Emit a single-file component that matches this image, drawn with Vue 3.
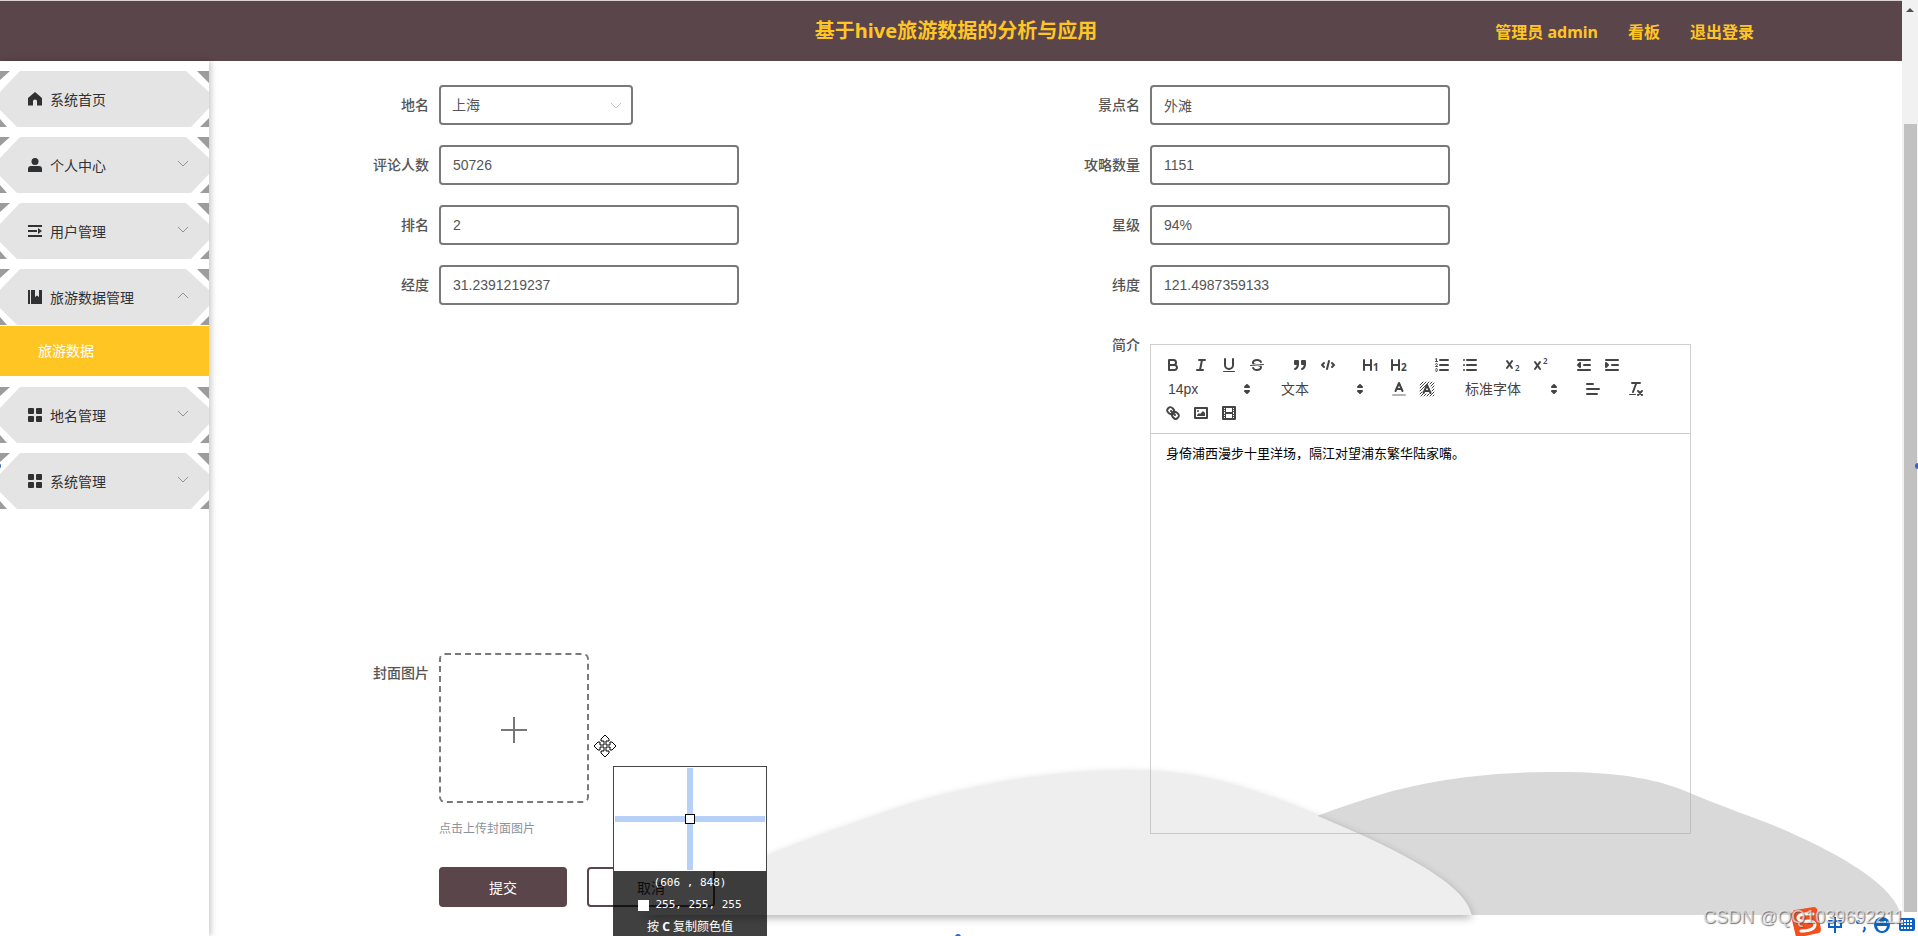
<script setup>
import { ref } from 'vue'

const menu = [
  { label: '系统首页', icon: 'home' },
  { label: '个人中心', icon: 'user', arrow: 'down' },
  { label: '用户管理', icon: 'list', arrow: 'down' },
  { label: '旅游数据管理', icon: 'book', arrow: 'up', children: ['旅游数据'] },
  { label: '地名管理', icon: 'grid', arrow: 'down' },
  { label: '系统管理', icon: 'grid', arrow: 'down' },
]

const place = ref('上海')
const fields = ref([
  { id: 'spot', label: '景点名', value: '外滩' },
  { id: 'comments', label: '评论人数', value: '50726' },
  { id: 'guides', label: '攻略数量', value: '1151' },
  { id: 'rank', label: '排名', value: '2' },
  { id: 'star', label: '星级', value: '94%' },
  { id: 'lng', label: '经度', value: '31.2391219237' },
  { id: 'lat', label: '纬度', value: '121.4987359133' },
])
const intro = ref('身倚浦西漫步十里洋场，隔江对望浦东繁华陆家嘴。')

const icons = {
  bold: '<path class="s" d="M5,4H9.5A2.5,2.5,0,0,1,12,6.5v0A2.5,2.5,0,0,1,9.5,9H5V4Z"/><path class="s" d="M5,9h5.5A2.5,2.5,0,0,1,13,11.5v0A2.5,2.5,0,0,1,10.5,14H5V9Z"/>',
  italic: '<path class="s" d="M7 4H13M5 14H11M8 14L10 4"/>',
  underline: '<path class="s" d="M5,3V9a4,4,0,0,0,4,4H9a4,4,0,0,0,4-4V3"/><rect class="f" height="1" rx="0.5" width="12" x="3" y="15"/>',
  strike: '<path class="s t" d="M15.5 8.5L2.5 9.5"/><path class="f" d="M9.007,8C6.542,7.791,6,7.519,6,6.5,6,5.792,7.283,5,9,5c1.571,0,2.765.679,2.969,1.309a1,1,0,0,0,1.9-.617C13.356,4.106,11.354,3,9,3,6.2,3,4,4.538,4,6.5a3.2,3.2,0,0,0,.5,1.843Z"/><path class="f" d="M8.984,10C11.457,10.208,12,10.479,12,11.5c0,0.708-1.283,1.5-3,1.5-1.571,0-2.765-.679-2.969-1.309a1,1,0,1,0-1.9.617C4.644,13.894,6.646,15,9,15c2.8,0,5-1.538,5-3.5a3.2,3.2,0,0,0-.5-1.843Z"/>',
  quote: '<rect class="f s" height="3" width="3" x="4" y="5"/><rect class="f s" height="3" width="3" x="11" y="5"/><path class="f s" d="M7,8c0,4.031-3,5-3,5"/><path class="f s" d="M14,8c0,4.031-3,5-3,5"/>',
  code: '<path class="s" d="M5 7L3 9L5 11M13 7L15 9L13 11M10 5L8 13"/>',
  h1: '<path class="s" d="M2 4V14M9 4V14M2 9H9"/><text x="11" y="15" class="d">1</text>',
  h2: '<path class="s" d="M2 4V14M9 4V14M2 9H9"/><text x="11" y="15" class="d">2</text>',
  ordered: '<path class="s" d="M7 4H15M7 9H15M7 14H15"/><path class="s t" d="M2.5 5.5H4.5M3.5 5.5V2.5L2.5 3"/><path class="s t" d="M4.5,10.5h-2c0-.234,1.85-1.076,1.85-2.234A0.959,0.959,0,0,0,2.5,8.156"/><path class="s t" d="M2.5,14.846a0.959,0.959,0,0,0,1.85-.109A0.7,0.7,0,0,0,3.75,14a0.688,0.688,0,0,0,.6-0.736,0.959,0.959,0,0,0-1.85-.109"/>',
  bullet: '<path class="s" d="M6 4H15M6 9H15M6 14H15M3 4H3M3 9H3M3 14H3"/>',
  sub: '<path class="s" d="M3 5L8 12M8 5L3 12"/><text x="11" y="15" class="d n">2</text>',
  sup: '<path class="s" d="M3 6L8 13M8 6L3 13"/><text x="11" y="8" class="d n">2</text>',
  outdent: '<path class="s" d="M3 14H15M3 4H15M9 9H15"/><path class="f s" d="M5 7V11L3 9Z"/>',
  indent: '<path class="s" d="M3 14H15M3 4H15M9 9H15"/><path class="f s" d="M3 7V11L5 9Z"/>',
  color: '<path class="s" opacity=".4" d="M3 15H15"/><path class="s" d="M5.5 11L9 3L12.5 11M11.63 9H6.38"/>',
  background: '<path class="s t" d="M2 5L5 2M2 8L8 2M2 11L11 2M2 14L4 12M12 4L14 2M3 16L5 14M13 6L16 3M6 16L8 14M14 8L16 6M9 16L11 14M14 11L16 9M12 16L16 12M15 16L16 15"/><path class="s" d="M5.5 13L9 5L12.5 13M11.63 11H6.38"/>',
  align: '<path class="s" d="M3 9H15M3 14H13M3 4H9"/>',
  clean: '<path class="s" d="M5 3H13M6 12L9.35 3M11 11L15 15M15 11L11 15"/><rect class="f" height="1" rx="0.5" width="7" x="2" y="14"/>',
  link: '<path class="s" d="M7 7L11 11"/><path class="s" d="M8.9,4.577a3.476,3.476,0,0,1,.36,4.679A3.476,3.476,0,0,1,4.577,8.9C3.185,7.5,2.035,6.4,4.217,4.217S7.5,3.185,8.9,4.577Z"/><path class="s" d="M13.423,9.1a3.476,3.476,0,0,0-4.679-.36,3.476,3.476,0,0,0,.36,4.679c1.392,1.392,2.5,2.542,4.679.36S14.815,10.5,13.423,9.1Z"/>',
  image: '<rect class="s" height="10" width="12" x="3" y="4"/><circle class="f" cx="6" cy="7" r="1"/><path class="f" d="M5 12V11L7 9L8 10L11 7L13 9V12Z"/>',
  video: '<rect class="s" height="12" width="12" x="3" y="3"/><path class="f" d="M5 3h1v12H5zM12 3h1v12h-1zM5 8h8v2H5zM3 5h3v1H3zM3 7h3v1H3zM3 10h3v1H3zM3 12h3v1H3zM12 5h3v1h-3zM12 7h3v1h-3zM12 10h3v1h-3zM12 12h3v1h-3z"/>',
}

const toolbar = [
  { buttons: ['bold', 'italic', 'underline', 'strike'] },
  { buttons: ['quote', 'code'] },
  { buttons: ['h1', 'h2'] },
  { buttons: ['ordered', 'bullet'] },
  { buttons: ['sub', 'sup'] },
  { buttons: ['outdent', 'indent'] },
  { select: '14px', title: '字号' },
  { select: '文本', title: '标题' },
  { buttons: ['color', 'background'] },
  { select: '标准字体', title: '字体', wide: true },
  { buttons: ['align'] },
  { buttons: ['clean'] },
  { buttons: ['link', 'image', 'video'] },
]
</script>

<template>
  <div class="page">
    <div class="view">
      <header class="top">
        <h1 class="title">基于hive旅游数据的分析与应用</h1>
        <nav class="links">
          <a href="#">管理员 admin</a>
          <a href="#">看板</a>
          <a href="#">退出登录</a>
        </nav>
      </header>

      <div class="body">
        <aside class="side">
          <ul class="menu">
            <li v-for="item in menu" :key="item.label">
              <button type="button" class="entry">
                <svg class="plate" viewBox="0 0 209 56" preserveAspectRatio="none" aria-hidden="true">
                  <path fill="#e4e4e4" d="M20 0H186L209 21V37L191 56H17L0 39V21Z" />
                  <path fill="#9c9c9c" d="M0 0H10L0 9ZM0 48L7 56H0ZM197 0H209V12ZM209 47V56H200Z" />
                </svg>
                <svg class="glyph" viewBox="0 0 14 14" aria-hidden="true">
                  <path v-if="item.icon === 'home'" d="M7 0L14 6V13.500H9V9Q9 7.500 7 7.500T5 9V13.500H0V6Z" />
                  <g v-else-if="item.icon === 'user'">
                    <circle cx="7" cy="3.500" r="3.500" /><path d="M0 14V11Q0 8 3 8H11Q14 8 14 11V14Z" />
                  </g>
                  <path v-else-if="item.icon === 'list'" d="M0 1H14V3H0ZM0 6H9V8H0ZM10 4L14 7L10 10ZM0 11H14V13H0Z" />
                  <path v-else-if="item.icon === 'book'" d="M0 0H2V14H0ZM3 0H7V7L9 5.500L11 7V0H14V14H3Z" />
                  <g v-else>
                    <rect width="6" height="6" rx="1" /><rect x="8" width="6" height="6" rx="1" />
                    <rect y="8" width="6" height="6" rx="1" /><rect x="8" y="8" width="6" height="6" rx="1" />
                  </g>
                </svg>
                <span class="name">{{ item.label }}</span>
                <svg v-if="item.arrow" class="arrow" viewBox="0 0 12 12" aria-hidden="true">
                  <path :d="item.arrow === 'up' ? 'M1 7L6 2L11 7' : 'M1 2L6 7L11 2'" />
                </svg>
              </button>
              <a v-for="child in item.children" :key="child" href="#" class="child">{{ child }}</a>
            </li>
          </ul>
        </aside>

        <main class="main">
          <svg class="hills" viewBox="632 765 1270 150" preserveAspectRatio="none" aria-hidden="true">
            <path fill="#d9d9d9" d="M1260 840C1285 828 1320 814 1360 801C1430 777 1500 772 1556 772C1625 772 1660 780 1690 793C1735 812 1770 822 1800 837C1850 860 1895 888 1901 915H1260Z" />
            <path class="front" d="M640 915C665 899 720 876 766 857C810 839 850 825 903 807C970 786 1050 771 1128 771C1200 771 1250 788 1318 816C1370 838 1465 878 1472 915Z" />
          </svg>

          <form class="form" @submit.prevent>
            <div class="item">
              <label for="place">地名</label>
              <span class="pick">
                <select id="place" v-model="place"><option>上海</option></select>
                <svg viewBox="0 0 12 12" aria-hidden="true"><path d="M1 3L6 8L11 3" /></svg>
              </span>
            </div>
            <div v-for="f in fields" :key="f.id" class="item">
              <label :for="f.id">{{ f.label }}</label>
              <input :id="f.id" v-model="f.value" type="text">
            </div>

            <div class="item intro">
              <label for="intro">简介</label>
              <div class="editor">
                <div class="tools">
                  <span v-for="(g, i) in toolbar" :key="i" class="group">
                    <span v-if="g.select" class="format" :class="{ wide: g.wide }">
                      <select :aria-label="g.title"><option>{{ g.select }}</option></select>
                      <svg viewBox="0 0 18 18" aria-hidden="true"><path d="M7 11L9 13L11 11ZM7 7L9 5L11 7Z" /></svg>
                    </span>
                    <button v-for="b in g.buttons" :key="b" type="button" :aria-label="b">
                      <svg viewBox="0 0 18 18" aria-hidden="true" v-html="icons[b]"></svg>
                    </button>
                  </span>
                </div>
                <textarea id="intro" v-model="intro" spellcheck="false"></textarea>
              </div>
            </div>

            <div class="item cover">
              <label for="cover">封面图片</label>
              <div>
                <button id="cover" type="button" class="upload" aria-label="上传">
                  <svg viewBox="0 0 26 26" aria-hidden="true"><path d="M13 0V26M0 13H26" /></svg>
                </button>
                <p class="tip">点击上传封面图片</p>
              </div>
            </div>

            <div class="actions">
              <button type="submit" class="submit">提交</button>
              <button type="button" class="cancel">取消</button>
            </div>
          </form>
        </main>
      </div>
    </div>

    <div class="scroll" aria-hidden="true">
      <svg viewBox="0 0 8 4"><path d="M0 4L4 0L8 4Z" /></svg>
      <div class="thumb"></div>
    </div>

    <svg class="mover" viewBox="0 0 24 24" aria-hidden="true">
      <path d="M12 1L16 5V7H13V11H17V8H19L23 12L19 16H17V13H13V17H16V19L12 23L8 19V17H11V13H7V16H5L1 12L5 8H7V11H11V7H8V5Z" />
    </svg>

    <div class="probe">
      <div class="lens"><i class="across"></i><i class="down"></i><i class="dot"></i></div>
      <div class="info">
        <div class="mono">(606 , 848)</div>
        <div class="mono"><i class="swatch"></i>255, 255, 255</div>
        <div>按 <b>C</b> 复制颜色值</div>
      </div>
    </div>

    <i class="knob left"></i>
    <i class="knob right"></i>
    <i class="knob bottom"></i>

    <svg class="ime" viewBox="0 0 128 30" aria-hidden="true">
      <path fill="#f4501e" d="M3 5Q3 3 5 3L24 0Q26 0 27 2L31 22Q31 25 29 26L10 30H6L1 9Q0 6 3 5Z" />
      <path fill="none" stroke="#fff" stroke-width="3" stroke-linecap="round" d="M23 7Q8 6 8 11Q9 15 18 14Q25 14 25 18Q24 24 11 24" />
      <g fill="none" stroke="#0b62c4" stroke-width="2">
        <path d="M39 14H51V20H39ZM45 10V26" />
        <path d="M74 20Q76 22 73 25" />
        <circle cx="68" cy="15" r="1" />
      </g>
      <circle cx="92" cy="18" r="8" fill="#0b62c4" />
      <path fill="#fff" d="M87 19H97Q96 24 92 24T87 19ZM88 14h2v2h-2zM94 14h2v2h-2z" />
      <rect x="109" y="11" width="16" height="13" rx="2" fill="#0b62c4" />
      <path stroke="#fff" stroke-width="2" stroke-dasharray="2 1" d="M111 14H123M111 17H123M111 21H123" />
    </svg>
    <span class="mark">CSDN @QQ1039692211</span>
  </div>
</template>

<style>
body {
  margin: 0;
  background: #fff;
}
</style>

<style scoped>
.page {
  --sans: "Noto Sans", "Noto Sans CJK SC", sans-serif;
  position: relative;
  display: flex;
  min-height: 100vh;
  overflow: hidden;
  font-family: var(--sans);
  font-size: 14px;
  color: #333;
}
.page *,
.page *::before {
  box-sizing: border-box;
}
button,
select,
input,
textarea {
  font: inherit;
  color: inherit;
  margin: 0;
}
button {
  cursor: pointer;
}
.view {
  flex: 1;
  display: flex;
  flex-direction: column;
  min-width: 0;
}
.top {
  display: grid;
  grid-template-columns: 1fr auto 1fr;
  align-items: center;
  height: 61px;
  padding: 0 148px 0 158px;
  background: #5a454b;
  border-top: 1px solid #ddd3d6;
  color: #ffc623;
}
.title {
  grid-column: 2;
  margin: 0;
  font-size: 20px;
  line-height: 30px;
}
.links {
  display: flex;
  justify-content: flex-end;
  gap: 30px;
  font-size: 16px;
  font-weight: 700;
}
.links a {
  color: inherit;
  text-decoration: none;
}
.body {
  flex: 1;
  display: flex;
}
.side {
  position: relative;
  width: 209px;
  padding-top: 10px;
  box-shadow: 2px 0 6px rgba(0, 0, 0, 0.22);
}
.menu {
  list-style: none;
  margin: 0;
  padding: 0;
  display: flex;
  flex-direction: column;
  gap: 10px;
}
.entry {
  position: relative;
  display: flex;
  align-items: center;
  width: 100%;
  height: 56px;
  padding: 0 20px 0 28px;
  border: 0;
  background: none;
  color: #303133;
}
.plate {
  position: absolute;
  inset: 0;
  width: 100%;
  height: 100%;
}
.glyph {
  position: relative;
  width: 14px;
  height: 14px;
  margin-right: 8px;
  fill: #303133;
}
.name {
  position: relative;
  flex: 1;
  text-align: left;
}
.arrow {
  position: relative;
  width: 12px;
  height: 12px;
  fill: none;
  stroke: #909399;
}
.child {
  display: block;
  height: 50px;
  margin: 1px 0;
  padding-left: 38px;
  line-height: 50px;
  background: #ffc623;
  color: #fff;
  text-decoration: none;
}
.main {
  position: relative;
  flex: 1;
  min-width: 0;
  padding: 24px 121px 28px 150px;
}
.hills {
  position: absolute;
  right: 0;
  bottom: 21px;
  width: 75%;
  height: 150px;
  overflow: visible;
}
.front {
  fill: #eee;
  filter: drop-shadow(0 3px 4px rgba(0, 0, 0, 0.3));
}
.form {
  position: relative;
  display: grid;
  grid-template-columns: 1fr 1fr;
  grid-template-rows: repeat(4, auto) 308px auto auto;
  row-gap: 20px;
}
.item {
  display: flex;
  align-items: flex-start;
}
.item > label {
  width: 80px;
  flex: none;
  padding-right: 10px;
  text-align: right;
  line-height: 40px;
  font-weight: 500;
  color: #555;
}
.item > input,
.pick select {
  height: 40px;
  border: 2px solid #797979;
  border-radius: 4px;
  background: #fff;
  color: #555;
  font-family: "Liberation Sans", "Noto Sans CJK SC", sans-serif;
  outline: none;
}
.item > input {
  width: 300px;
  padding: 0 12px;
}
.pick {
  position: relative;
  width: 194px;
}
.pick select {
  width: 100%;
  padding: 0 11px;
  appearance: none;
}
.pick svg {
  position: absolute;
  right: 11px;
  top: 15px;
  width: 12px;
  height: 12px;
  fill: none;
  stroke: #c0c4cc;
  pointer-events: none;
}
.intro {
  grid-column: 2;
  grid-row: 5 / span 2;
}
.editor {
  width: 541px;
  margin-top: 19px;
  border: 1px solid rgba(170, 170, 170, 0.55);
}
.tools {
  display: flex;
  flex-wrap: wrap;
  column-gap: 15px;
  padding: 8px;
  border-bottom: 1px solid #ccc;
}
.group {
  display: flex;
  height: 24px;
}
.group button {
  width: 28px;
  height: 24px;
  padding: 3px 5px;
  border: 0;
  background: none;
}
.group svg {
  display: block;
  width: 18px;
  height: 18px;
}
.group :deep(.f) {
  fill: #444;
}
.group :deep(.s) {
  stroke: #444;
  stroke-width: 2;
  stroke-linecap: round;
  stroke-linejoin: round;
}
.group :deep(.s:not(.f)) {
  fill: none;
}
.group :deep(.t) {
  stroke-width: 1;
}
.group :deep(.d) {
  font: 700 10px "Noto Sans", sans-serif;
  fill: #444;
}
.group :deep(.n) {
  font-weight: 600;
  font-size: 8px;
}
.format {
  position: relative;
  width: 98px;
  color: #444;
}
.format.wide {
  width: 108px;
}
.format select {
  width: 100%;
  height: 24px;
  padding: 0 20px 0 9px;
  border: 0;
  background: none;
  appearance: none;
  font-family: "Liberation Sans", "Noto Sans CJK SC", sans-serif;
}
.format svg {
  position: absolute;
  right: 1px;
  top: 3px;
  fill: #444;
  stroke: #444;
  stroke-width: 2;
  stroke-linejoin: round;
  pointer-events: none;
}
.editor textarea {
  display: block;
  width: 100%;
  height: 399px;
  padding: 10px 15px;
  border: 0;
  background: none;
  resize: none;
  outline: none;
  font-size: 13px;
  line-height: 18px;
  color: #000;
}
.cover {
  grid-column: 1;
  grid-row: 6;
}
.upload {
  display: flex;
  align-items: center;
  justify-content: center;
  width: 150px;
  height: 150px;
  padding: 4px 0 0;
  border: 2px dashed #797979;
  border-radius: 6px;
  background: none;
}
.upload svg {
  width: 26px;
  height: 26px;
  stroke: #777;
  stroke-width: 2;
}
.tip {
  margin: 14px 0 0;
  font-size: 12px;
  line-height: 24px;
  color: #8c939d;
}
.actions {
  grid-column: 1;
  grid-row: 7;
  display: flex;
  gap: 20px;
  margin-top: 6px;
  padding-left: 80px;
}
.actions button {
  width: 128px;
  height: 40px;
  border: 2px solid #5a454b;
  border-radius: 4px;
}
.submit {
  background: #5a454b;
  color: #fff;
}
.cancel {
  background: #fff;
  color: #333;
}
.scroll {
  display: flex;
  flex-direction: column;
  align-items: center;
  width: 16px;
  margin-bottom: 24px;
  padding-top: 8px;
  background: #f1f1f1;
}
.scroll svg {
  width: 8px;
  height: 4px;
  fill: #505050;
}
.thumb {
  flex: 1;
  width: 13px;
  margin-top: 112px;
  background: #c1c1c1;
}
.mover {
  position: absolute;
  left: 593px;
  top: 734px;
  width: 24px;
  height: 24px;
  fill: #fff;
  stroke: #000;
  stroke-width: 1;
}
.probe {
  position: absolute;
  left: 613px;
  top: 766px;
  width: 154px;
}
.lens {
  position: relative;
  height: 105px;
  border: 1px solid #444;
  border-bottom: 0;
  background: #fff;
}
.across,
.down,
.dot {
  position: absolute;
  background: #b6d0f8;
}
.across {
  left: 1px;
  right: 1px;
  top: 49px;
  height: 6px;
}
.down {
  top: 1px;
  bottom: 1px;
  left: 73px;
  width: 6px;
}
.dot {
  left: 71px;
  top: 47px;
  width: 10px;
  height: 10px;
  border: 1px solid #000;
  background: #fff;
}
.info {
  height: 65px;
  padding-top: 1px;
  background: rgba(0, 0, 0, 0.75);
  color: #fff;
  font-size: 12px;
  line-height: 22px;
  text-align: center;
}
.mono {
  font-family: "DejaVu Sans Mono", monospace;
  font-size: 11px;
}
.swatch {
  display: inline-block;
  width: 11px;
  height: 11px;
  margin-right: 6px;
  vertical-align: middle;
  background: #fff;
}
.knob {
  position: absolute;
  width: 6px;
  height: 6px;
  border-radius: 50%;
  background: #3565c8;
}
.knob.left {
  left: -5px;
  top: 463px;
}
.knob.right {
  right: -3px;
  top: 463px;
}
.knob.bottom {
  left: 955px;
  bottom: -4px;
}
.ime {
  position: absolute;
  right: 0;
  bottom: -1px;
  width: 128px;
  height: 30px;
}
.mark {
  position: absolute;
  right: 14px;
  bottom: 7px;
  font-family: "Liberation Sans", sans-serif;
  font-size: 18px;
  line-height: 24px;
  color: rgba(230, 230, 230, 0.75);
  text-shadow: 1px 1px 1px rgba(80, 80, 80, 0.8);
}
</style>
